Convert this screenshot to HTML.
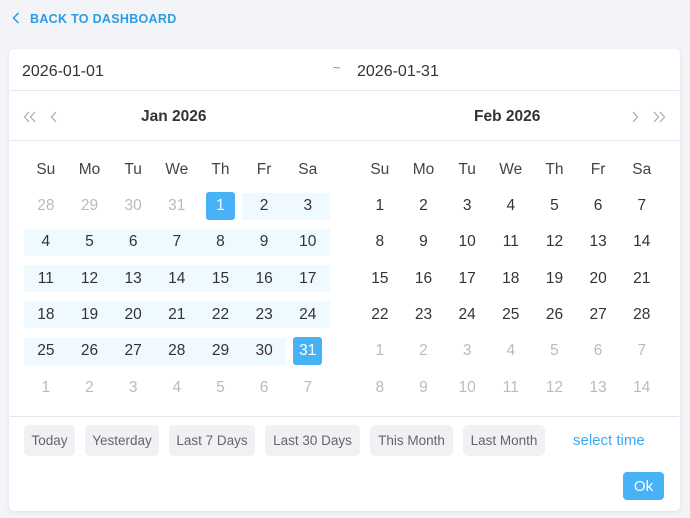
<!DOCTYPE html>
<html><head><meta charset="utf-8"><style>
*{margin:0;padding:0;box-sizing:border-box}
body{width:690px;height:518px;background:#f3f4f8;font-family:"Liberation Sans",sans-serif;position:relative;overflow:hidden;color:#333}
.back{position:absolute;left:12px;top:12px;color:#2a9be6;font-size:12.5px;font-weight:bold;letter-spacing:.3px}
.back svg{vertical-align:-1px;margin-right:10px}
.panel{position:absolute;left:9px;top:49px;width:671px;height:462px;background:#fff;border-radius:5px;box-shadow:0 1px 4px rgba(0,0,0,.08)}
.abs{position:absolute}
.inp{font-size:16px;color:#333;top:63px}
.line{position:absolute;height:1px;background:#e4e6ea}
.title{position:absolute;top:108px;font-size:15.5px;font-weight:bold;color:#333}
.grid{position:absolute;display:grid;grid-template-columns:repeat(7,43.67px);grid-auto-rows:36.33px}
.grid div{display:flex;align-items:center;justify-content:center;font-size:15.5px;position:relative;z-index:1}
.grid .o{color:#bbb}
.grid .b::before{content:"";position:absolute;left:0;right:0;top:4.5px;height:27px;background:#eefaff;z-index:-1}
.grid .s{color:#fff}
.grid .s::before{content:"";position:absolute;left:7.3px;width:29px;top:4px;height:28px;background:#47b2f5;border-radius:3px;z-index:-1}
.wk{position:absolute;top:161px;display:grid;grid-template-columns:repeat(7,43.67px)}
.wk div{text-align:center;font-size:15.5px;color:#444}
.btn{position:absolute;top:425px;height:31px;background:#f0f1f5;border-radius:5px;font-size:13.5px;color:#666;display:flex;align-items:center;justify-content:center}
.nav{position:absolute;top:110px;color:#aaa}
</style></head><body>
<div class="back"><svg width="8" height="12" viewBox="0 0 8 12"><path d="M6.5 1L1.5 6l5 5" fill="none" stroke="#2a9be6" stroke-width="1.5"/></svg>BACK TO DASHBOARD</div>
<div class="panel"></div>
<div class="abs inp" style="left:22px">2026-01-01</div>
<div class="abs" style="left:333px;top:60px;font-size:13px;color:#888">~</div>
<div class="abs inp" style="left:357px">2026-01-31</div>
<div class="line" style="left:10px;width:669px;top:90px"></div>
<div class="line" style="left:10px;width:669px;top:140px"></div>
<svg class="nav" style="left:23px" width="14" height="14" viewBox="0 0 14 14"><path d="M6 2L1.5 7 6 12M12 2L7.5 7 12 12" fill="none" stroke="#aaa" stroke-width="1.2"/></svg>
<svg class="nav" style="left:50px" width="8" height="14" viewBox="0 0 8 14"><path d="M6 2L1.5 7 6 12" fill="none" stroke="#aaa" stroke-width="1.2"/></svg>
<svg class="nav" style="left:631px" width="8" height="14" viewBox="0 0 8 14"><path d="M2 2L6.5 7 2 12" fill="none" stroke="#aaa" stroke-width="1.2"/></svg>
<svg class="nav" style="left:652px" width="14" height="14" viewBox="0 0 14 14"><path d="M2 2L6.5 7 2 12M8 2L12.5 7 8 12" fill="none" stroke="#aaa" stroke-width="1.2"/></svg>
<div class="title" style="left:141px">Jan 2026</div>
<div class="title" style="left:474px">Feb 2026</div>
<div class="wk" style="left:24px"><div>Su</div><div>Mo</div><div>Tu</div><div>We</div><div>Th</div><div>Fr</div><div>Sa</div></div>
<div class="wk" style="left:358px"><div>Su</div><div>Mo</div><div>Tu</div><div>We</div><div>Th</div><div>Fr</div><div>Sa</div></div>
<div class="grid" style="left:24px;top:188px">
<div class="o">28</div><div class="o">29</div><div class="o">30</div><div class="o">31</div><div class="s">1</div><div class="b">2</div><div class="b">3</div>
<div class="b">4</div><div class="b">5</div><div class="b">6</div><div class="b">7</div><div class="b">8</div><div class="b">9</div><div class="b">10</div>
<div class="b">11</div><div class="b">12</div><div class="b">13</div><div class="b">14</div><div class="b">15</div><div class="b">16</div><div class="b">17</div>
<div class="b">18</div><div class="b">19</div><div class="b">20</div><div class="b">21</div><div class="b">22</div><div class="b">23</div><div class="b">24</div>
<div class="b">25</div><div class="b">26</div><div class="b">27</div><div class="b">28</div><div class="b">29</div><div class="b">30</div><div class="s">31</div>
<div class="o">1</div><div class="o">2</div><div class="o">3</div><div class="o">4</div><div class="o">5</div><div class="o">6</div><div class="o">7</div>
</div>
<div class="grid" style="left:358px;top:188px">
<div>1</div><div>2</div><div>3</div><div>4</div><div>5</div><div>6</div><div>7</div>
<div>8</div><div>9</div><div>10</div><div>11</div><div>12</div><div>13</div><div>14</div>
<div>15</div><div>16</div><div>17</div><div>18</div><div>19</div><div>20</div><div>21</div>
<div>22</div><div>23</div><div>24</div><div>25</div><div>26</div><div>27</div><div>28</div>
<div class="o">1</div><div class="o">2</div><div class="o">3</div><div class="o">4</div><div class="o">5</div><div class="o">6</div><div class="o">7</div>
<div class="o">8</div><div class="o">9</div><div class="o">10</div><div class="o">11</div><div class="o">12</div><div class="o">13</div><div class="o">14</div>
</div>
<div class="line" style="left:10px;width:669px;top:416px"></div>
<div class="btn" style="left:24px;width:51px">Today</div>
<div class="btn" style="left:85px;width:74px">Yesterday</div>
<div class="btn" style="left:169px;width:86px">Last 7 Days</div>
<div class="btn" style="left:265px;width:95px">Last 30 Days</div>
<div class="btn" style="left:370px;width:83px">This Month</div>
<div class="btn" style="left:463px;width:82px">Last Month</div>
<div class="abs" style="left:573px;top:432px;font-size:15px;color:#3aaaf0">select time</div>
<div class="abs" style="left:623px;top:472px;width:41px;height:28px;background:#47b2f5;border-radius:4px;color:#fff;font-size:15px;display:flex;align-items:center;justify-content:center">Ok</div>
</body></html>
